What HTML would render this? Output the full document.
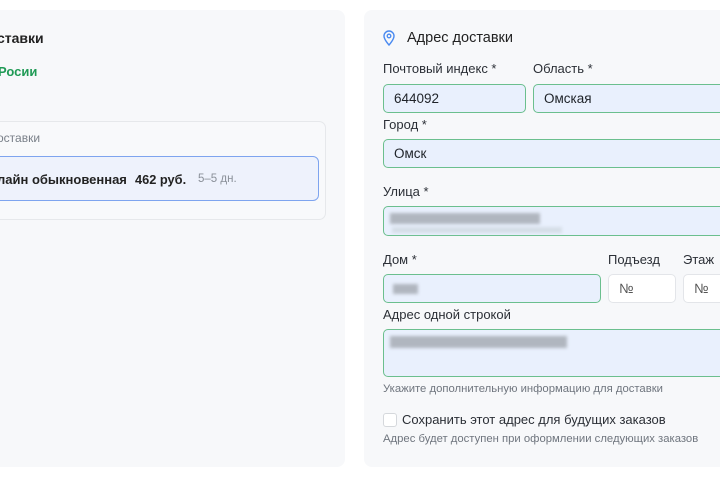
<!DOCTYPE html>
<html><head><meta charset="utf-8"><style>
body{margin:0;width:720px;height:480px;background:#fff;font-family:"Liberation Sans",sans-serif;position:relative;overflow:hidden;color:#1f2329}
.a{position:absolute;white-space:nowrap}
.panel{position:absolute;background:#f7f8fa;border-radius:8px}
.lbl{font-size:13px;color:#2b2f36}
.inp{position:absolute;box-sizing:border-box;border:1.5px solid #6bbf8e;background:#e9f0fd;border-radius:5px;font-size:13.5px;padding-left:10px;display:flex;align-items:center}
.w{background:#fff;border:1px solid #e3e5e9;color:#555}
.blur{position:absolute;background:#9ea3ab;filter:blur(1.5px);opacity:.75}
</style></head><body>
<div class="panel" style="left:-10px;top:10px;width:355px;height:457px"></div>
<div class="panel" style="left:364px;top:10px;width:370px;height:457px"></div>

<div class="a" style="left:-3px;top:30px;font-size:14px;font-weight:bold;color:#222">ставки</div>
<div class="a" style="left:-2px;top:64px;font-size:13px;font-weight:bold;color:#1f9a55">Росии</div>
<div style="position:absolute;left:-10px;top:121px;width:336px;height:99px;border:1px solid #e6e8eb;border-radius:7px;background:#f8f9fb;box-sizing:border-box"></div>
<div class="a" style="left:-3px;top:131px;font-size:12px;color:#7a8089">оставки</div>
<div style="position:absolute;left:-10px;top:156px;width:329px;height:45px;border:1.5px solid #7ea4ef;border-radius:6px;background:#eef2fc;box-sizing:border-box"></div>
<div class="a" style="left:-3px;top:172px;font-size:13px;font-weight:bold;color:#222">лайн обыкновенная</div>
<div class="a" style="left:135px;top:172px;font-size:12.8px;font-weight:bold;color:#222">462 руб.</div>
<div class="a" style="left:198px;top:173px;font-size:11.5px;color:#8a9099">5–5 дн.</div>

<svg class="a" style="left:383px;top:30px" width="12" height="16" viewBox="0 0 12 16"><path d="M6 15C6 15 1 9.5 1 6A5 5 0 0 1 11 6C11 9.5 6 15 6 15Z" fill="none" stroke="#4a8af0" stroke-width="1.4"/><circle cx="6" cy="6" r="1.8" fill="none" stroke="#4a8af0" stroke-width="1.3"/></svg>
<div class="a" style="left:407px;top:30px;font-size:14.5px;font-weight:500;color:#222">Адрес доставки</div>

<div class="a lbl" style="left:383px;top:61px">Почтовый индекс *</div>
<div class="a lbl" style="left:533px;top:61px">Область *</div>
<div class="inp" style="left:383px;top:84px;width:143px;height:29px">644092</div>
<div class="inp" style="left:533px;top:84px;width:200px;height:29px">Омская</div>
<div class="a lbl" style="left:383px;top:117px">Город *</div>
<div class="inp" style="left:383px;top:139px;width:350px;height:29px">Омск</div>
<div class="a lbl" style="left:383px;top:184px">Улица *</div>
<div class="inp" style="left:383px;top:206px;width:350px;height:30px"></div>
<div class="blur" style="left:390px;top:213px;width:150px;height:11px"></div>
<div class="blur" style="left:392px;top:227px;width:170px;height:6px;background:#cfd8e0"></div>
<div class="a lbl" style="left:383px;top:252px">Дом *</div>
<div class="a lbl" style="left:608px;top:252px">Подъезд</div>
<div class="a lbl" style="left:683px;top:252px">Этаж</div>
<div class="inp" style="left:383px;top:274px;width:218px;height:29px"></div>
<div class="blur" style="left:393px;top:284px;width:25px;height:10px"></div>
<div class="inp w" style="left:608px;top:274px;width:68px;height:29px">№</div>
<div class="inp w" style="left:683px;top:274px;width:60px;height:29px">№</div>
<div class="a lbl" style="left:383px;top:307px">Адрес одной строкой</div>
<div class="inp" style="left:383px;top:329px;width:350px;height:48px"></div>
<div class="blur" style="left:390px;top:336px;width:177px;height:12px"></div>
<div class="a" style="left:383px;top:383px;font-size:11.3px;color:#6f757e">Укажите дополнительную информацию для доставки</div>
<div style="position:absolute;left:383px;top:413px;width:12px;height:12px;border:1px solid #d5d8dc;border-radius:3px;background:#fff"></div>
<div class="a" style="left:402px;top:412px;font-size:13px;color:#2b2f36">Сохранить этот адрес для будущих заказов</div>
<div class="a" style="left:383px;top:433px;font-size:11.3px;color:#6f757e">Адрес будет доступен при оформлении следующих заказов</div>
</body></html>
